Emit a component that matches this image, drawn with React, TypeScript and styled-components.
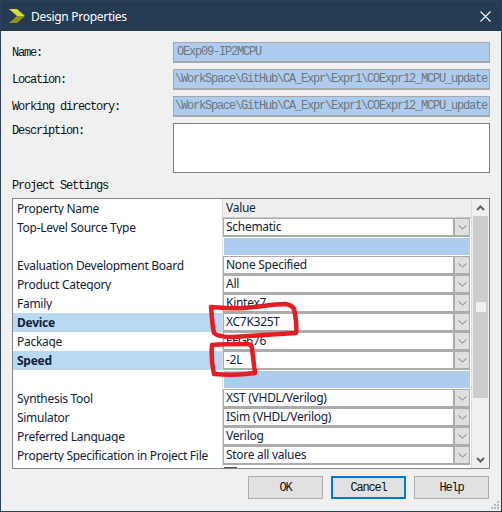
// App.tsx
import React from 'react';
import styled, { createGlobalStyle } from 'styled-components';

const GlobalStyle = createGlobalStyle`
  html, body {
    margin: 0;
    padding: 0;
    background: #f0f0f0;
  }
`;

// --- Styled Components ---
const Window = styled.div`
  position: relative;
  box-sizing: border-box;
  width: 502px;
  height: 512px;
  border: 1px solid #2b4158;
  background: #f0f0f0;
  overflow: hidden;
  display: flex;
  flex-direction: column;
`;

const TitleBar = styled.div`
  flex: none;
  height: 30px;
  background: #253b54;
  display: flex;
  align-items: center;
  padding: 0 10px 0 8px;
  gap: 5px;
`;

const TitleText = styled.span`
  flex: 1;
  color: #ffffff;
  font: 12px "Noto Sans", sans-serif;
  letter-spacing: -0.28px;
`;

const Body = styled.div`
  flex: 1;
  display: flex;
  flex-direction: column;
  padding: 11px 11px 0 11px;
`;

const FieldRow = styled.div`
  display: grid;
  grid-template-columns: 161px 317px;
  margin-bottom: 6px;
`;

const MonoLabel = styled.label<{ $top?: number }>`
  font: 12px/12px "Liberation Mono", monospace;
  letter-spacing: -1.2px;
  color: #111111;
  padding-top: ${({ $top }) => $top ?? 5}px;
`;

const ReadOnlyField = styled.div<{ $inset?: number }>`
  box-sizing: border-box;
  height: 21px;
  border: 1px solid #a4a8ad;
  border-bottom-width: 2px;
  background: #aecced;
  color: #6d7680;
  font: 12px/18px "Liberation Mono", monospace;
  letter-spacing: -1.2px;
  white-space: nowrap;
  overflow: hidden;
  padding-left: ${({ $inset }) => $inset ?? 1}px;
`;

const DescriptionField = styled.div`
  box-sizing: border-box;
  height: 50px;
  border: 1px solid #7a7f87;
  background: #ffffff;
`;

const SectionTitle = styled(MonoLabel)`
  display: block;
  padding-top: 0;
  margin: 1px 0 6px;
`;

const TableFrame = styled.div`
  box-sizing: border-box;
  width: 478px;
  height: 271px;
  border: 1px solid #7f858c;
  display: flex;
  background: #ffffff;
`;

const Rows = styled.div`
  width: 458px;
  overflow: hidden;
`;

const Row = styled.div`
  display: grid;
  grid-template-columns: 209px 1px 248px;
  height: 19px;
  background: #ffffff;
`;

const NameCell = styled.div<{ $active?: boolean }>`
  height: 19px;
  background: ${({ $active }) => ($active ? '#b9d8f1' : '#ffffff')};
`;

// descenders get cut off by the cell in the original dialog
const NameText = styled.div<{ $active?: boolean }>`
  box-sizing: border-box;
  height: 16px;
  padding: 2px 0 0 4px;
  overflow: hidden;
  white-space: nowrap;
  color: #12223a;
  font: ${({ $active }) => ($active ? 700 : 400)} 12px/15px "Noto Sans", sans-serif;
  letter-spacing: -0.28px;
`;

const Divider = styled.div`
  background: #dcdcdc;
`;

const HeaderValue = styled.div`
  box-sizing: border-box;
  height: 19px;
  background: #efefef;
  border-bottom: 1px solid #c8c8c8;
  padding-left: 3px;
  color: #12223a;
  font: 12px/18px "Noto Sans", sans-serif;
  letter-spacing: -0.28px;
`;

const Combo = styled.div`
  box-sizing: border-box;
  width: 247px;
  height: 19px;
  border: 1px solid #ababab;
  border-width: 1px 1px 2px 1px;
  background: #ffffff;
  display: flex;
  overflow: hidden;
`;

const ComboText = styled.div`
  flex: 1;
  padding-left: 2px;
  font: 12px/15px "Noto Sans", sans-serif;
  letter-spacing: -0.28px;
  color: #12223a;
  white-space: nowrap;
`;

const ComboButton = styled.div`
  flex: none;
  width: 14px;
  background: #dfdfdf;
  border-left: 2px solid #ababab;
  display: flex;
  align-items: center;
  justify-content: center;
`;

const BlueCell = styled.div`
  box-sizing: border-box;
  height: 19px;
  background: #aecced;
  border: 1px solid #ffffff;
`;

const CheckSliver = styled.div`
  width: 13px;
  height: 2px;
  margin: 2px 0 0 1px;
  background: #555555;
`;

const Scrollbar = styled.div`
  width: 18px;
  box-sizing: border-box;
  border-left: 1px solid #dcdcdc;
  background: #f0f0f0;
  display: flex;
  flex-direction: column;
`;

const ScrollArrow = styled.div`
  flex: none;
  height: 17px;
  display: flex;
  align-items: center;
  justify-content: center;
`;

const ScrollThumb = styled.div`
  flex: none;
  height: 182px;
  margin: 0 1px;
  background: #cdcdcd;
  display: flex;
  align-items: center;
  justify-content: center;
`;

const ThumbGrip = styled.div`
  width: 10px;
  height: 10px;
  background: #f0f0f0;
`;

const ScrollSpacer = styled.div`
  flex: 1;
`;

const ButtonRow = styled.div`
  display: flex;
  justify-content: flex-end;
  gap: 8px;
  margin-top: 7px;
  padding-right: 1px;
`;

const DialogButton = styled.div<{ $primary?: boolean }>`
  box-sizing: border-box;
  width: 75px;
  height: 23px;
  background: #e1e1e1;
  border: ${({ $primary }) => ($primary ? '2px solid #0078d7' : '1px solid #adadad')};
  font: 12px "Liberation Mono", monospace;
  letter-spacing: -1.2px;
  color: #111111;
  display: flex;
  align-items: center;
  justify-content: center;
`;

const Grip = styled.svg`
  position: absolute;
  right: 1px;
  bottom: 1px;
`;

const Annotations = styled.svg`
  position: absolute;
  left: -1px;
  top: -1px;
  pointer-events: none;
`;

// --- Icons ---
const Logo = () => (
  <svg width="17" height="14" viewBox="0 0 17 14">
    <path d="M0 0h8l8 7H8z" fill="#d8dc3c" />
    <path d="M8 7h8l-8 7H0z" fill="#8f9418" />
  </svg>
);

const CloseIcon = () => (
  <svg width="11" height="11" viewBox="0 0 11 11" stroke="#ffffff" strokeWidth="1.1" fill="none">
    <path d="M0.5 0.5l10 10M10.5 0.5l-10 10" />
  </svg>
);

const Chevron = () => (
  <svg width="9" height="5" viewBox="0 0 9 5" fill="none" stroke="#7b7b7b" strokeWidth="1">
    <path d="M0.5 0.5l4 3.5 4-3.5" />
  </svg>
);

const ScrollChevron = ({ up }: { up?: boolean }) => (
  <svg width="9" height="6" viewBox="0 0 9 6" fill="none" stroke="#606060" strokeWidth="2">
    <path d={up ? 'M1 5l3.5-3.5L8 5' : 'M1 1l3.5 3.5L8 1'} />
  </svg>
);

// --- Data ---
type PropertyRow = { name: string; value?: string; active?: boolean };

const properties: PropertyRow[] = [
  { name: 'Top-Level Source Type', value: 'Schematic' },
  { name: '' },
  { name: 'Evaluation Development Board', value: 'None Specified' },
  { name: 'Product Category', value: 'All' },
  { name: 'Family', value: 'Kintex7' },
  { name: 'Device', value: 'XC7K325T', active: true },
  { name: 'Package', value: 'FFG676' },
  { name: 'Speed', value: '-2L', active: true },
  { name: '' },
  { name: 'Synthesis Tool', value: 'XST (VHDL/Verilog)' },
  { name: 'Simulator', value: 'ISim (VHDL/Verilog)' },
  { name: 'Preferred Language', value: 'Verilog' },
  { name: 'Property Specification in Project File', value: 'Store all values' },
];

const workPath = '\\WorkSpace\\GitHub\\CA_Expr\\Expr1\\COExpr12_MCPU_update';

const App: React.FC = () => (
  <>
    <GlobalStyle />
    <Window>
      <TitleBar>
        <Logo />
        <TitleText>Design Properties</TitleText>
        <CloseIcon />
      </TitleBar>
      <Body>
        <FieldRow>
          <MonoLabel>Name:</MonoLabel>
          <ReadOnlyField $inset={3}>OExp09-IP2MCPU</ReadOnlyField>
        </FieldRow>
        <FieldRow>
          <MonoLabel>Location:</MonoLabel>
          <ReadOnlyField>{workPath}</ReadOnlyField>
        </FieldRow>
        <FieldRow>
          <MonoLabel>Working directory:</MonoLabel>
          <ReadOnlyField>{workPath}</ReadOnlyField>
        </FieldRow>
        <FieldRow>
          <MonoLabel $top={2}>Description:</MonoLabel>
          <DescriptionField />
        </FieldRow>
        <SectionTitle>Project Settings</SectionTitle>
        <TableFrame>
          <Rows>
            <Row>
              <NameCell>
                <NameText>Property Name</NameText>
              </NameCell>
              <Divider />
              <HeaderValue>Value</HeaderValue>
            </Row>
            {properties.map((p, i) => (
              <Row key={i}>
                <NameCell $active={p.active}>
                  <NameText $active={p.active}>{p.name}</NameText>
                </NameCell>
                <Divider />
                {p.value ? (
                  <Combo>
                    <ComboText>{p.value}</ComboText>
                    <ComboButton>
                      <Chevron />
                    </ComboButton>
                  </Combo>
                ) : (
                  <BlueCell />
                )}
              </Row>
            ))}
            <Row>
              <NameCell />
              <Divider />
              <CheckSliver />
            </Row>
          </Rows>
          <Scrollbar>
            <ScrollArrow>
              <ScrollChevron up />
            </ScrollArrow>
            <ScrollThumb>
              <ThumbGrip />
            </ScrollThumb>
            <ScrollSpacer />
            <ScrollArrow>
              <ScrollChevron />
            </ScrollArrow>
          </Scrollbar>
        </TableFrame>
        <ButtonRow>
          <DialogButton>OK</DialogButton>
          <DialogButton $primary>Cancel</DialogButton>
          <DialogButton>Help</DialogButton>
        </ButtonRow>
      </Body>
      <Grip width="10" height="10" viewBox="0 0 10 10" fill="#b8b8b8">
        <rect x="7" y="1" width="2" height="2" />
        <rect x="4" y="4" width="2" height="2" />
        <rect x="7" y="4" width="2" height="2" />
        <rect x="1" y="7" width="2" height="2" />
        <rect x="4" y="7" width="2" height="2" />
        <rect x="7" y="7" width="2" height="2" />
      </Grip>
      <Annotations width="502" height="512" fill="none" stroke="#e81c20" strokeWidth="4.5" strokeLinecap="round" strokeLinejoin="round">
        <path d="M211 307C222 308 234 309 244 308C258 307 272 304 286 304C292 305 295 308 295 314C296 320 297 327 296 333C280 334 250 336 233 337C224 337 217 336 214 333C212 325 212 316 211 307" />
        <path d="M212 345C224 344 238 344 247 344C251 344 252 346 252 349C253 357 254 365 255 373C242 375 226 375 214 374C212 365 211 355 212 345" />
      </Annotations>
    </Window>
  </>
);

export default App;
